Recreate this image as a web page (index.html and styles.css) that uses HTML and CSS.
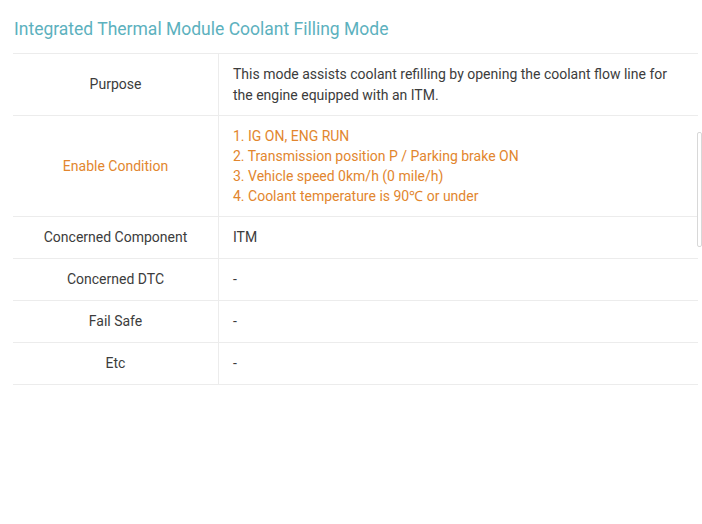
FILE: index.html
```html
<!DOCTYPE html>
<html>
<head>
<meta charset="utf-8">
<link rel="stylesheet" href="styles.css">
</head>
<body>
<div class="page">
  <h1 class="title">Integrated Thermal Module Coolant Filling Mode</h1>
  <div class="table-wrap">
    <table class="info">
      <tr class="tight">
        <th>Purpose</th>
        <td>This mode assists coolant refilling by opening the coolant flow line for the engine equipped with an ITM.</td>
      </tr>
      <tr class="warn">
        <th>Enable Condition</th>
        <td class="list">1. IG ON, ENG RUN<br>2. Transmission position P / Parking brake ON<br>3. Vehicle speed 0km/h (0 mile/h)<br>4. Coolant temperature is 90℃ or under</td>
      </tr>
      <tr>
        <th>Concerned Component</th>
        <td>ITM</td>
      </tr>
      <tr>
        <th>Concerned DTC</th>
        <td>-</td>
      </tr>
      <tr>
        <th>Fail Safe</th>
        <td>-</td>
      </tr>
      <tr>
        <th>Etc</th>
        <td>-</td>
      </tr>
    </table>
    <div class="scroll-ind"></div>
  </div>
</div>
</body>
</html>
```

FILE: styles.css
```css
html, body {
  margin: 0;
  padding: 0;
  background: #ffffff;
}
body {
  font-family: Roboto, "Liberation Sans", sans-serif;
  color: #3c3c3c;
}
.page {
  padding: 17px 4px 0 13px;
}
.title {
  margin: 0 0 0 1px;
  font-size: 17.5px;
  font-weight: 400;
  line-height: 24px;
  color: #5cb1be;
}
.table-wrap {
  position: relative;
  margin-top: 12px;
}
.info {
  width: 685px;
  border-collapse: collapse;
  font-size: 14px;
}
.info tr {
  border-top: 1px solid #ececec;
  border-bottom: 1px solid #ececec;
}
.info th {
  width: 175px;
  padding: 10px 15px;
  font-weight: 400;
  text-align: center;
  line-height: 21px;
  border-right: 1px solid #ececec;
}
.info td {
  padding: 10px 15px 10px 14px;
  line-height: 21px;
  text-align: left;
  vertical-align: middle;
}
.info tr.tight td {
  line-height: 20.5px;
}
.info tr.warn th,
.info tr.warn td {
  color: #e2862e;
}
.info td.list {
  line-height: 20px;
}
.scroll-ind {
  position: absolute;
  left: 684px;
  top: 79px;
  width: 3px;
  height: 113px;
  border: 1px solid #d8d8d8;
  border-radius: 2px;
}
```
